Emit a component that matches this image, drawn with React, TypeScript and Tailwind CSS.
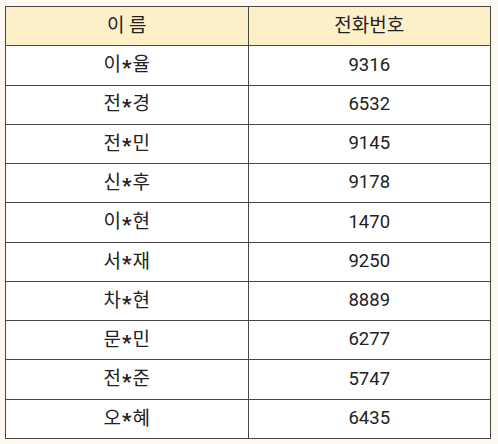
import React from "react";

const rows: [string, string][] = [
  ["이*율", "9316"],
  ["전*경", "6532"],
  ["전*민", "9145"],
  ["신*후", "9178"],
  ["이*현", "1470"],
  ["서*재", "9250"],
  ["차*현", "8889"],
  ["문*민", "6277"],
  ["전*준", "5747"],
  ["오*혜", "6435"],
];

function Name({ text }: { text: string }) {
  const [a, b] = text.split("*");
  return (
    <span className="flex items-center">
      <span>{a}</span>
      <span className="text-[21px] font-bold translate-y-[3px] mx-[1px] leading-none">*</span>
      <span>{b}</span>
    </span>
  );
}

export default function App() {
  return (
    <div className="w-[498px] h-[444px] bg-[#fdf8f0] pl-[5px] pt-[6px]">
      <div
        className="grid grid-cols-2 grid-rows-11 gap-px p-px bg-[#474747] w-[486px] h-[433px] text-[#222]"
        style={{ fontFamily: "Roboto, 'Noto Sans CJK KR', sans-serif" }}
      >
        <div className="bg-[#fdf0c9] flex items-center justify-center text-[19px]">이 름</div>
        <div className="bg-[#fdf0c9] flex items-center justify-center text-[19px]">전화번호</div>
        {rows.map(([n, p]) => (
          <React.Fragment key={n + p}>
            <div className="bg-white flex items-center justify-center text-[19px]">
              <Name text={n} />
            </div>
            <div className="bg-white flex items-center justify-center text-[18.5px]">{p}</div>
          </React.Fragment>
        ))}
      </div>
    </div>
  );
}
